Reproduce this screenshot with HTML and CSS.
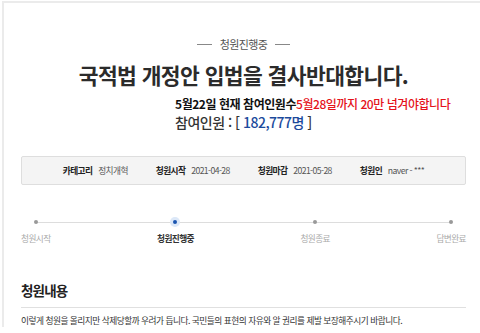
FILE: index.html
```html
<!DOCTYPE html>
<html lang="ko">
<head>
  <meta charset="UTF-8">
  <meta name="viewport" content="width=device-width, initial-scale=1.0">
  <title>청원진행중</title>
  <link rel="stylesheet" href="styles.css">
</head>
<body>
  <div class="page">
    <div class="status"><span class="dash"></span>청원진행중<span class="dash"></span></div>
    <h1 class="title">국적법 개정안 입법을 결사반대합니다.</h1>
    <div class="count">
      <p class="notice">5월22일 현재 참여인원수<span class="red">5월28일까지 20만 넘겨야합니다</span></p>
      <p class="total">참여인원 : [ <span class="num">182,777명</span> ]</p>
    </div>

    <ul class="info">
      <li><b>카테고리</b> 정치개혁</li>
      <li><b>청원시작</b> 2021-04-28</li>
      <li><b>청원마감</b> 2021-05-28</li>
      <li><b>청원인</b> naver - ***</li>
    </ul>

    <div class="steps">
      <div class="step"><span class="dot"></span><span class="label">청원시작</span></div>
      <div class="step active"><span class="dot"></span><span class="label">청원진행중</span></div>
      <div class="step"><span class="dot"></span><span class="label">청원종료</span></div>
      <div class="step"><span class="dot"></span><span class="label">답변완료</span></div>
    </div>

    <h2 class="section">청원내용</h2>
    <p class="body">이렇게 청원을 올리지만 삭제당할까 우려가 듭니다. 국민들의 표현의 자유와 알 권리를 제발 보장해주시기 바랍니다.</p>
  </div>
</body>
</html>
```

FILE: styles.css
```css
body {
  margin: 0;
  font-family: "Noto Sans CJK KR", "Noto Sans", sans-serif;
  color: #333;
  background: #fff;
}

.page {
  margin: 1px 0 0 2px;
  border-left: 2px solid #ebebeb;
  border-top: 2px solid #ebebeb;
  width: 445px;
  padding: 0 14px 0 17px;
}

.status {
  display: flex;
  justify-content: center;
  align-items: center;
  gap: 8px;
  margin-top: 33px;
  font-size: 11px;
  letter-spacing: -0.6px;
  color: #555;
  line-height: 16px;
}

.dash {
  width: 15px;
  border-top: 1px solid #888;
}

.title {
  margin: 9px 0 0;
  text-align: center;
  font-size: 21.5px;
  letter-spacing: -0.6px;
  font-weight: 700;
  line-height: 28px;
  color: #2b2b2b;
}

.count {
  padding-left: 154px;
  margin-top: 6px;
}

.count p {
  margin: 0;
}

.notice {
  font-size: 12px;
  font-weight: 700;
  letter-spacing: -0.45px;
  line-height: 17px;
  color: #111;
}

.red {
  color: #e5121b;
  font-weight: 500;
}

.total {
  font-size: 14px;
  letter-spacing: -0.5px;
  line-height: 20px;
  color: #333;
  font-weight: 500;
}

.num {
  color: #1c4a9c;
}

.info {
  list-style: none;
  margin: 24px 0 0;
  padding: 0;
  height: 27px;
  display: flex;
  justify-content: center;
  align-items: center;
  gap: 28px;
  background: #f4f4f4;
  border: 1px solid #dedede;
  border-radius: 2px;
  font-size: 8.7px;
  letter-spacing: -0.6px;
  color: #555;
}

.info b {
  color: #222;
  margin-right: 4px;
}

.steps {
  display: flex;
  justify-content: space-between;
  margin-top: 32px;
  position: relative;
}

.steps::before {
  content: "";
  position: absolute;
  left: 14px;
  right: 14px;
  top: 5px;
  border-top: 1px solid #ddd;
}

.step {
  display: flex;
  flex-direction: column;
  align-items: center;
  gap: 9px;
  position: relative;
}

.dot {
  width: 4px;
  height: 4px;
  margin-top: 3px;
  border-radius: 50%;
  background: #999;
}

.label {
  font-size: 8.7px;
  letter-spacing: -0.6px;
  color: #aaa;
  line-height: 12px;
}

.step.active .dot {
  background: #1a54b0;
  box-shadow: 0 0 0 3px #dce8f8;
}

.step.active .label {
  color: #333;
  font-weight: 700;
}

.section {
  margin: 36px 0 0;
  padding-bottom: 8px;
  border-bottom: 1px solid #e0e0e0;
  font-size: 13.5px;
  letter-spacing: -0.8px;
  line-height: 18px;
  color: #222;
}

.body {
  margin: 7px 0 0;
  font-size: 8.7px;
  letter-spacing: -0.5px;
  line-height: 12px;
  color: #333;
}
```
